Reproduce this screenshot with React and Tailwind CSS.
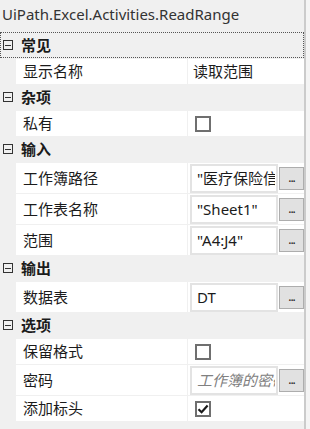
import React from 'react';

const CJK = { fontFamily: '"Segoe UI", "Noto Sans", "Noto Sans CJK SC", sans-serif' };

const GROUPS = [
    { name: '常见', focused: true, rows: [{ label: '显示名称', type: 'text', value: '读取范围' }] },
    { name: '杂项', rows: [{ label: '私有', type: 'check', value: false }] },
    {
        name: '输入', rows: [
            { label: '工作簿路径', type: 'box', value: '"医疗保险信息.xlsx"' },
            { label: '工作表名称', type: 'box', value: '"Sheet1"' },
            { label: '范围', type: 'box', value: '"A4:J4"' },
        ]
    },
    { name: '输出', rows: [{ label: '数据表', type: 'box', value: 'DT' }] },
    {
        name: '选项', rows: [
            { label: '保留格式', type: 'check', value: false },
            { label: '密码', type: 'box', value: '工作簿的密码', placeholder: true },
            { label: '添加标头', type: 'check', value: true },
        ]
    },
];

function Checkbox({ checked }) {
    return (
        <div className="w-[16px] h-[16px] border-2 border-[#6f6f6f] bg-white flex items-center justify-center ml-[7px]">
            {checked && (
                <svg width="12" height="12" viewBox="0 0 12 12">
                    <path d="M1.5 6.2 L4.6 9.2 L10.6 2.6" fill="none" stroke="#1a1a1a" strokeWidth="2.2" />
                </svg>
            )}
        </div>
    );
}

function Row({ row }) {
    const tall = row.type === 'box';
    return (
        <div className={`mt-px flex bg-white ml-[16px] ${tall ? 'h-[30px]' : 'h-[25px]'}`}>
            <div className="w-[171px] shrink-0 flex items-center pl-[7px] text-[15px] text-[#1b1b1b]">{row.label}</div>
            <div className="w-px shrink-0 bg-[#f0f0f0]" />
            <div className="flex-1 min-w-0 flex items-center">
                {row.type === 'text' && <span className="pl-[5px] text-[15px] text-[#1b1b1b]">{row.value}</span>}
                {row.type === 'check' && <Checkbox checked={row.value} />}
                {row.type === 'box' && (
                    <div className="flex items-center h-full">
                        <div className="ml-[2px] w-[88px] shrink-0 h-[29px] border-2 border-[#e3e3e3] flex items-center overflow-hidden whitespace-nowrap pl-[5px]">
                            <span className={`block w-[78px] overflow-hidden text-[15px] ${row.placeholder ? 'italic text-[#808080]' : 'text-[#1b1b1b]'}`}>{row.value}</span>
                        </div>
                        <div className="ml-px w-[25px] shrink-0 h-[23px] bg-[#e1e1e1] border border-[#adadad] flex items-end justify-center pb-[5px]">
                            <span className="text-[12px] leading-none text-[#1b1b1b] tracking-[-1px]">...</span>
                        </div>
                    </div>
                )}
            </div>
        </div>
    );
}

function Header({ group }) {
    return (
        <div className={`h-[26px] flex items-center ${group.focused ? 'border border-dotted border-[#555]' : 'border border-transparent'}`}>
            <div className="ml-[2px] w-[10px] h-[10px] border border-[#333] flex items-center justify-center">
                <div className="w-[6px] h-px bg-[#333]" />
            </div>
            <span className="ml-[8px] text-[15px] font-bold text-[#1b1b1b]">{group.name}</span>
        </div>
    );
}

export default function App() {
    return (
        <div className="w-[310px] h-[429px] bg-[#f0f0f0] flex overflow-hidden" style={CJK}>
            <div className="w-[304px] flex flex-col">
                <div className="h-[32px] flex items-start pl-[2px] pt-[3px] text-[15px] text-[#333]">
                    UiPath.Excel.Activities.ReadRange
                </div>
                {GROUPS.map(g => (
                    <div key={g.name}>
                        <Header group={g} />
                        {g.rows.map(r => <Row key={r.label} row={r} />)}
                    </div>
                ))}
            </div>
            <div className="w-[2px] bg-[#cbcbcb]" />
            <div className="flex-1 bg-[#f4f4f4]" />
        </div>
    );
}
